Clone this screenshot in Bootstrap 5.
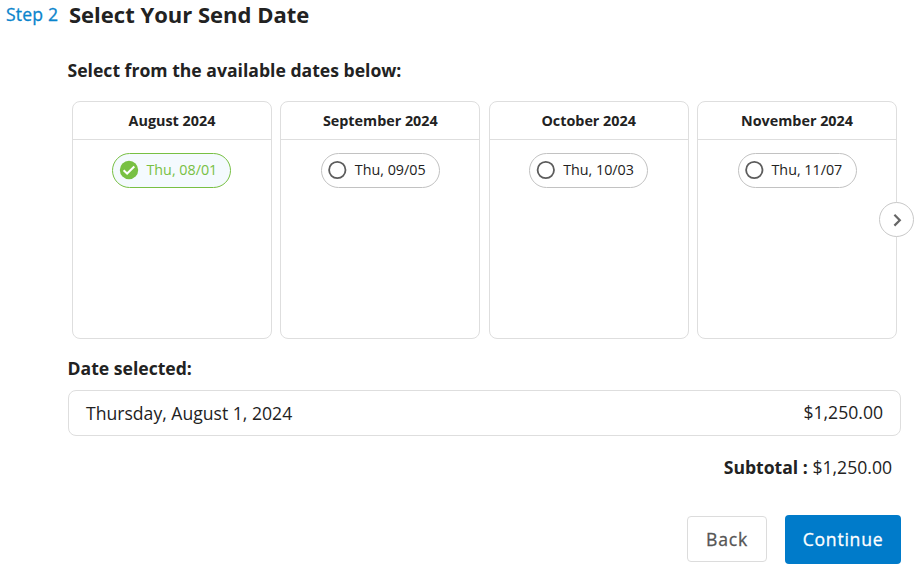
<!DOCTYPE html>
<html lang="en">
<head>
<meta charset="utf-8">
<meta name="viewport" content="width=device-width, initial-scale=1">
<title>Select Your Send Date</title>
<link href="https://cdn.jsdelivr.net/npm/bootstrap@5.3.0/dist/css/bootstrap.min.css" rel="stylesheet">
<style>
body{font-family:"Open Sans","Noto Sans",sans-serif;color:#222;background:#fff;font-size:17.6px;line-height:24px;overflow:hidden}
.step-head{height:30px;padding-left:6px}
.step-no{width:63px;font-size:17.6px;letter-spacing:.15px;padding-bottom:2px;color:#0a84cc;-webkit-text-stroke:.3px #0a84cc}
.step-title{font-size:22px;font-weight:700;line-height:28px;padding-bottom:2px}
.step-body{padding:0 14px 0 68px}
.label-line{font-size:17.6px;font-weight:700;line-height:24px;margin-left:-.5px}
.pick-label{margin-top:28px}
.months{margin:19px 4px 0;gap:8.4px;height:238px}
.month{border:1px solid #dedede;border-radius:8px;flex:1 1 0;min-width:0}
.month-name{font-size:14.35px;font-weight:700;height:38px;line-height:37px;border-bottom:1px solid #dedede}
.date-pill{margin-top:13px;height:35px;border:1px solid #c2c2c2;border-radius:18px;padding:0 13px 1px 6px;gap:7px;font-size:14.3px;line-height:20px;width:119px;background:#fff;color:#222;white-space:nowrap}
.date-pill svg{flex:none}
.date-pill.chosen{border-color:#78c043;background:#f4fafe;color:#78c043}
.next-btn{width:35px;height:35px;border:1px solid #c8c8c8;right:-17px;top:101px;background:#fff}
.picked-label{margin-top:17px}
.picked{margin-top:10px;height:46px;border:1px solid #dedede;border-radius:8px;padding:0 17px}
.picked-price{padding-bottom:2px}
.subtotal{margin-top:19px;padding-right:9px}
.actions{margin-top:36px;gap:18px}
.actions .btn{font-size:17.6px;letter-spacing:.75px;padding:0;border-radius:4px;-webkit-text-stroke:.3px currentColor}
.btn-back{width:80px;height:46px;margin-bottom:1px;border:1px solid #dcdcdc;color:#555;background:#fff}
.actions .btn-go{width:116px;height:49px;background:#007bca;color:#fff;border:0}
</style>
</head>
<body>
<header class="step-head d-flex align-items-center">
  <span class="step-no">Step 2</span>
  <h1 class="step-title m-0">Select Your Send Date</h1>
</header>
<main class="step-body">
  <div class="label-line pick-label"><span>Select from the available dates below:</span></div>
  <div class="months d-flex position-relative">
    <section class="month"><div class="month-name text-center"><span>August 2024</span></div>
      <button class="date-pill chosen d-flex align-items-center mx-auto"><svg width="20" height="20" viewBox="0 0 20 20"><circle cx="10" cy="10" r="9.2" fill="#78c043"/><path d="M4.6 10.2l3.5 3.3 7.2-7" fill="none" stroke="#fff" stroke-width="2"/></svg><span>Thu, 08/01</span></button></section>
    <section class="month"><div class="month-name text-center"><span>September 2024</span></div>
      <button class="date-pill d-flex align-items-center mx-auto"><svg width="20" height="20" viewBox="0 0 20 20"><circle cx="9.3" cy="10" r="8.2" fill="none" stroke="#5c5c5c" stroke-width="1.8"/></svg><span>Thu, 09/05</span></button></section>
    <section class="month"><div class="month-name text-center"><span>October 2024</span></div>
      <button class="date-pill d-flex align-items-center mx-auto"><svg width="20" height="20" viewBox="0 0 20 20"><circle cx="9.8" cy="10" r="8.2" fill="none" stroke="#5c5c5c" stroke-width="1.8"/></svg><span>Thu, 10/03</span></button></section>
    <section class="month"><div class="month-name text-center"><span>November 2024</span></div>
      <button class="date-pill d-flex align-items-center mx-auto"><svg width="20" height="20" viewBox="0 0 20 20"><circle cx="9.3" cy="10" r="8.2" fill="none" stroke="#5c5c5c" stroke-width="1.8"/></svg><span>Thu, 11/07</span></button></section>
    <button class="next-btn rounded-circle position-absolute p-0 d-flex align-items-center justify-content-center" aria-label="Next months"><svg width="16" height="16" viewBox="0 0 16 16"><path d="M5.4 2.8l5.4 5.5-5.4 5.3" fill="none" stroke="#666" stroke-width="2.2"/></svg></button>
  </div>
  <div class="label-line picked-label"><span>Date selected:</span></div>
  <div class="picked d-flex align-items-center justify-content-between"><span>Thursday, August 1, 2024</span><span class="picked-price">$1,250.00</span></div>
  <div class="subtotal text-end"><strong>Subtotal :</strong> <span>$1,250.00</span></div>
  <div class="actions d-flex justify-content-end align-items-center">
    <button class="btn btn-back">Back</button>
    <button class="btn btn-go">Continue</button>
  </div>
</main>
<script src="https://cdn.jsdelivr.net/npm/bootstrap@5.3.0/dist/js/bootstrap.bundle.min.js"></script>
</body>
</html>
